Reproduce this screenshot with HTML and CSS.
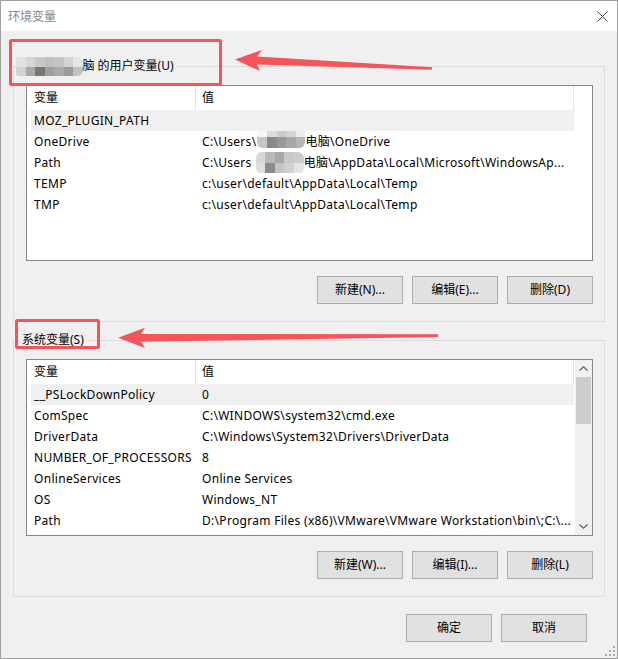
FILE: index.html
```html
<!DOCTYPE html>
<html lang="zh-CN">
<head>
<meta charset="utf-8">
<title>环境变量</title>
<link rel="stylesheet" href="styles.css">
</head>
<body>
<div class="window">
  <div class="titlebar">
    <span class="title">环境变量</span>
    <svg class="close" viewBox="0 0 11 11"><path d="M0.5 0.5L10.5 10.5M10.5 0.5L0.5 10.5" stroke="#444" stroke-width="1" fill="none"/></svg>
  </div>
  <div class="content">
    <fieldset class="group group-user">
      <legend><span class="mosaic m-legend"><i class="k1"></i><i class="k2"></i><i class="k3"></i><i class="k4"></i><i class="k5"></i><i class="k6"></i><i class="k7"></i><i class="k8"></i><i class="k9"></i><i class="k10"></i><i class="k11"></i><i class="k12"></i><i class="k13"></i><i class="k14"></i></span>脑 的用户变量(U)</legend>
      <div class="group-body">
        <div class="list list-user">
          <div class="list-main">
            <div class="list-head"><div class="hc hc1">变量</div><div class="hc hc2">值</div></div>
            <div class="row sel"><div class="c1">MOZ_PLUGIN_PATH</div><div class="c2"></div></div>
            <div class="row"><div class="c1">OneDrive</div><div class="c2">C:\Users\<span class="mosaic m-row"><i class="r1"></i><i class="r2"></i><i class="r3"></i><i class="r4"></i><i class="r5"></i><i class="r6"></i><i class="r7"></i><i class="r8"></i><i class="r9"></i><i class="r10"></i></span>电脑\OneDrive</div></div>
            <div class="row"><div class="c1">Path</div><div class="c2">C:\Users<span class="mosaic m-row m-path"><i class="s1"></i><i class="s2"></i><i class="s3"></i><i class="s4"></i><i class="s5"></i><i class="s6"></i><i class="s7"></i><i class="s8"></i><i class="s9"></i><i class="s10"></i></span>电脑\AppData\Local\Microsoft\WindowsAp...</div></div>
            <div class="row"><div class="c1">TEMP</div><div class="c2">c:\user\default\AppData\Local\Temp</div></div>
            <div class="row"><div class="c1">TMP</div><div class="c2">c:\user\default\AppData\Local\Temp</div></div>
          </div>
        </div>
        <div class="btn-row">
          <button class="btn">新建(N)...</button>
          <button class="btn">编辑(E)...</button>
          <button class="btn">删除(D)</button>
        </div>
      </div>
    </fieldset>

    <fieldset class="group group-sys">
      <legend>系统变量(S)</legend>
      <div class="group-body">
        <div class="list list-sys">
          <div class="list-main">
            <div class="list-head"><div class="hc hc1">变量</div><div class="hc hc2">值</div></div>
            <div class="row sel"><div class="c1">__PSLockDownPolicy</div><div class="c2">0</div></div>
            <div class="row"><div class="c1">ComSpec</div><div class="c2">C:\WINDOWS\system32\cmd.exe</div></div>
            <div class="row"><div class="c1">DriverData</div><div class="c2">C:\Windows\System32\Drivers\DriverData</div></div>
            <div class="row"><div class="c1">NUMBER_OF_PROCESSORS</div><div class="c2">8</div></div>
            <div class="row"><div class="c1">OnlineServices</div><div class="c2">Online Services</div></div>
            <div class="row"><div class="c1">OS</div><div class="c2">Windows_NT</div></div>
            <div class="row"><div class="c1">Path</div><div class="c2">D:\Program Files (x86)\VMware\VMware Workstation\bin\;C:\...</div></div>
          </div>
          <div class="vscroll">
            <div class="sb-btn"><svg viewBox="0 0 9 5" class="chev"><path d="M0.5 4.5L4.5 0.8L8.5 4.5" stroke="#606060" stroke-width="1.2" fill="none"/></svg></div>
            <div class="sb-thumb"></div>
            <div class="sb-track"></div>
            <div class="sb-btn"><svg viewBox="0 0 9 5" class="chev"><path d="M0.5 0.5L4.5 4.2L8.5 0.5" stroke="#606060" stroke-width="1.2" fill="none"/></svg></div>
          </div>
        </div>
        <div class="btn-row">
          <button class="btn">新建(W)...</button>
          <button class="btn">编辑(I)...</button>
          <button class="btn">删除(L)</button>
        </div>
      </div>
    </fieldset>

    <div class="dialog-btns">
      <button class="btn">确定</button>
      <button class="btn">取消</button>
    </div>
  </div>
  <svg class="grip" viewBox="0 0 12 12"><g fill="#a8a8a8"><rect x="9" y="1" width="2" height="2"/><rect x="5" y="5" width="2" height="2"/><rect x="9" y="5" width="2" height="2"/><rect x="1" y="9" width="2" height="2"/><rect x="5" y="9" width="2" height="2"/><rect x="9" y="9" width="2" height="2"/></g></svg>
</div>

<svg class="annot" viewBox="0 0 618 659">
  <g fill="none" stroke="#f4555a" stroke-width="3">
    <rect x="10.5" y="40.5" width="210" height="44" rx="1"/>
    <rect x="16.5" y="320.5" width="82" height="27" rx="1"/>
  </g>
  <g fill="#f4555a">
    <polygon points="235,59.5 262,50 257,56.5 432,67.2 432,69.8 257,64.5 260,71"/>
    <polygon points="118,337.7 145,327.7 141,334 438,334.3 438,337 141,341.7 145,348"/>
  </g>
</svg>
</body>
</html>
```

FILE: styles.css
```css
* { box-sizing: border-box; }
html, body { margin: 0; padding: 0; }
body {
  width: 618px;
  height: 659px;
  position: relative;
  overflow: hidden;
  background: #f0f0f0;
  font-family: "Noto Sans", "Noto Sans CJK SC", sans-serif;
  font-size: 12px;
  color: #000;
}
.window {
  width: 618px;
  height: 659px;
  border: 1px solid #a0a0a0;
  background: #f0f0f0;
  display: flex;
  flex-direction: column;
  position: relative;
}
.titlebar {
  flex: none;
  height: 30px;
  background: #fff;
  display: flex;
  align-items: center;
  justify-content: space-between;
  padding: 0 9px 0 7px;
}
.title { color: #858585; font-size: 12px; }
.close { width: 11px; height: 11px; display: block; }

.content {
  display: flex;
  flex-direction: column;
  padding: 27px 12px 0 12px;
}
.group {
  margin: 0;
  padding: 0;
  border: 1px solid #dcdcdc;
  min-width: 0;
}
.group legend {
  margin-left: 5px;
  padding: 0 3px;
  height: 16px;
  line-height: 16px;
  white-space: nowrap;
}
.group-sys { margin-top: 10px; }
.group-body {
  display: flex;
  flex-direction: column;
  padding: 11px 11px 17px 12px;
}

.mosaic { display: inline-grid; vertical-align: middle; letter-spacing: 0; }
.mosaic i { display: block; }
.m-legend {
  grid-template-columns: repeat(7, 9.5px);
  grid-template-rows: 9.5px 9.5px;
  margin: -2px 0 -2px -6px;
  border-radius: 3px 6px 6px 3px;
  overflow: hidden;
}
.k1 { background: #e3e1e0; } .k2 { background: #d8d6d5; } .k3 { background: #c9c8c7; } .k4 { background: #c2c0be; }
.k5 { background: #c4c4c6; } .k6 { background: #d4d3d3; } .k7 { background: #e6e6e6; }
.k8 { background: #d4d2d1; } .k9 { background: #a7a9ab; } .k10 { background: #7b7670; } .k11 { background: #a09e9c; }
.k12 { background: #a7a9ad; } .k13 { background: #9e9a99; } .k14 { background: #c2c1c1; }

.m-row {
  grid-template-columns: repeat(5, 9.6px);
  grid-template-rows: 11px 11px;
  margin: -2px 0 -1px 1px;
  border-radius: 6px;
  overflow: hidden;
  transform: translateY(-5px);
}
.m-path { transform: translateY(0); margin-left: 4px; }
.r1 { background: #f6f6f6; } .r2 { background: #dcdcdc; } .r3 { background: #cbcbcb; } .r4 { background: #d3d3d3; } .r5 { background: #ececec; }
.r6 { background: #c6c6c6; } .r7 { background: #8c8886; } .r8 { background: #9a9898; } .r9 { background: #a8a8a8; } .r10 { background: #b6b6b6; }
.s1 { background: #d8d8d8; } .s2 { background: #bcb8b8; } .s3 { background: #a9a7a7; } .s4 { background: #c9c9c9; } .s5 { background: #cdcdcd; }
.s6 { background: #e0e0e0; } .s7 { background: #8c8a8a; } .s8 { background: #c4c4c4; } .s9 { background: #cfcfcf; } .s10 { background: #e4e4e4; }

.list {
  display: flex;
  height: 176px;
  border: 1px solid #828790;
  background: #fff;
}
.list-sys { height: 177px; }
.list-main {
  flex: 1;
  min-width: 0;
  overflow: hidden;
}
.list-head {
  display: flex;
  width: 547px;
  height: 24px;
}
.hc {
  line-height: 24px;
  border-right: 1px solid #e5e5e5;
  white-space: nowrap;
}
.hc1 { width: 169px; padding-left: 7px; }
.hc2 { width: 378px; padding-left: 6px; }
.row {
  display: flex;
  width: 543px;
  height: 21px;
  margin-left: 4px;
  line-height: 21px;
  white-space: nowrap;
  letter-spacing: 0.3px;
}
.row.sel { background: #f0f0f0; }
.c1 { width: 165px; padding-left: 3px; overflow: hidden; }
.c2 { flex: 1; padding-left: 6px; overflow: hidden; }

.vscroll {
  flex: none;
  width: 17px;
  background: #f0f0f0;
  display: flex;
  flex-direction: column;
}
.sb-btn {
  flex: none;
  height: 17px;
  display: flex;
  align-items: center;
  justify-content: center;
}
.chev { width: 9px; height: 5px; display: block; }
.sb-thumb {
  flex: none;
  height: 47px;
  margin: 0 1px;
  background: #cdcdcd;
}
.sb-track { flex: 1; }

.btn-row {
  display: flex;
  justify-content: flex-end;
  gap: 9px;
  margin-top: 15px;
}
.btn {
  width: 86px;
  height: 28px;
  margin: 0;
  padding: 0;
  background: #e1e1e1;
  border: 1px solid #adadad;
  border-radius: 0;
  font: inherit;
  color: #000;
  line-height: 26px;
  text-align: center;
}
.dialog-btns {
  display: flex;
  justify-content: flex-end;
  gap: 9px;
  margin-top: 17px;
  padding-right: 18px;
}
.grip {
  position: absolute;
  right: 1px;
  bottom: 1px;
  width: 12px;
  height: 12px;
}
.annot {
  position: absolute;
  left: 0;
  top: 0;
  width: 618px;
  height: 659px;
  pointer-events: none;
}
```
